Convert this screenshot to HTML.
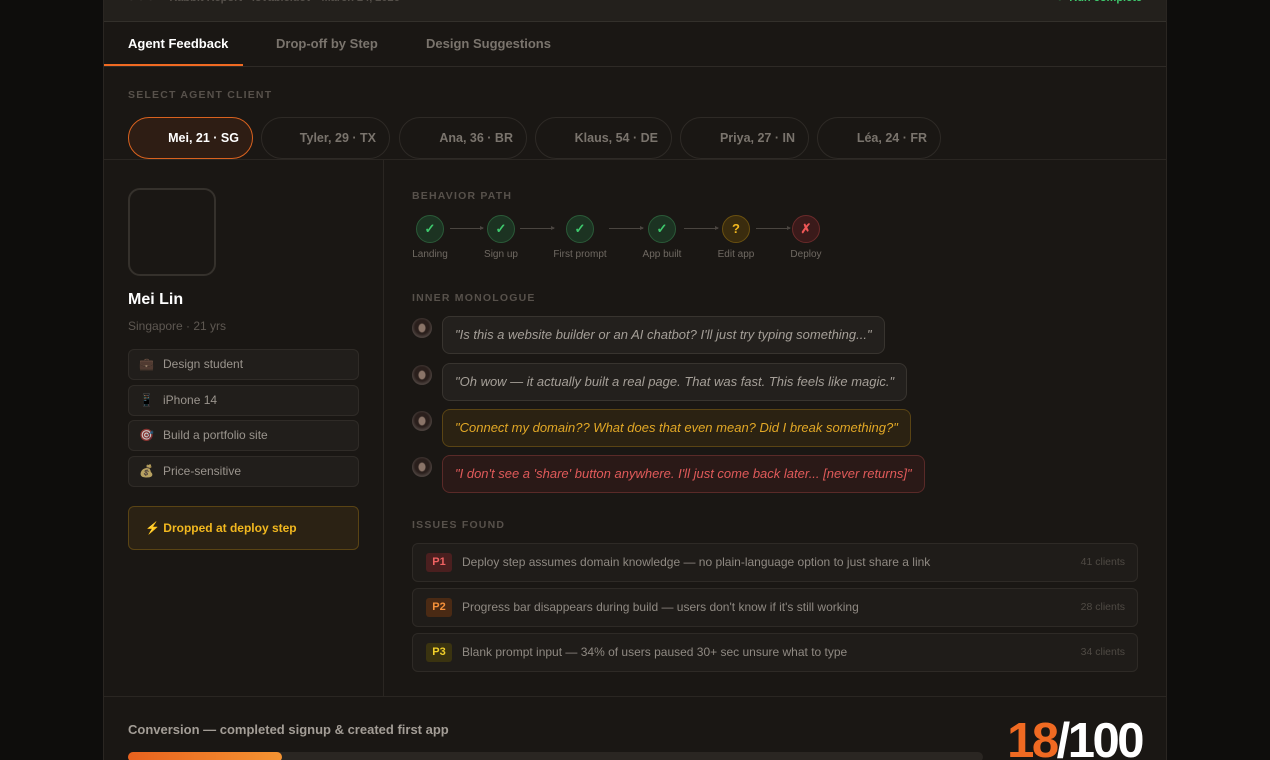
<!DOCTYPE html>
<html><head><meta charset="utf-8"><style>
*{box-sizing:border-box;margin:0;padding:0}
html,body{width:1270px;height:760px;overflow:hidden}
body{background:#0e0d0c;font-family:"Liberation Sans",sans-serif;position:relative}
.panel{position:absolute;left:103px;top:0;width:1064px;height:760px;background:#1a1714;border-left:1px solid #2a2622;border-right:1px solid #2a2622;overflow:hidden}
.top{position:absolute;left:0;top:0;width:100%;height:22px;background:#23201c;border-bottom:1px solid #33302b;overflow:hidden}
.tabs{position:absolute;top:22px;left:0;width:100%;height:45px;border-bottom:1px solid #2e2a26}
.tab{position:absolute;top:14px;font-size:13px;font-weight:bold;color:#7a746d}
.lab{position:absolute;font-size:10.5px;font-weight:bold;letter-spacing:1.2px;color:#57514b}
.pill{position:absolute;top:117px;height:42px;border:1px solid #2e2a26;border-radius:21px;font-size:12.5px;font-weight:bold;color:#7a746d;text-align:right;padding-right:13px;line-height:40px}
.chip{position:absolute;left:24px;width:231px;height:31px;border:1px solid #2f2b27;border-radius:6px;background:#211e1b;font-size:12px;color:#9a948d;line-height:29px;padding-left:34px}
.chip i{position:absolute;left:10px;font-style:normal;font-size:12px;filter:saturate(.5) brightness(.8)}
.step{position:absolute;top:215px;width:28px;height:28px;border-radius:50%;text-align:center;line-height:26px;font-size:13px;font-weight:bold}
.ok{background:#1c3322;border:1px solid #2a5a38;color:#3ec96d}
.sl{position:absolute;top:249px;font-size:10px;color:#6f6962;text-align:center;width:80px}
.arr{position:absolute;top:228px;height:1px;background:#4a4540}
.arr:after{content:"";position:absolute;right:-1px;top:-2px;border-left:4px solid #4a4540;border-top:2.5px solid transparent;border-bottom:2.5px solid transparent}
.av{position:absolute;left:412px;width:20px;height:20px;border-radius:50%;background:radial-gradient(ellipse 4px 5px at 50% 50%,#8a7468 0 3px,transparent 4px),radial-gradient(circle at 50% 45%,#2a1f1c 0 7px,#4a403c 10px)}
.bub{position:absolute;left:442px;height:38px;border-radius:8px;border:1px solid #38342f;background:#23201d;font-size:13px;font-style:italic;color:#a59f98;line-height:36px;padding:0 12px}
.iss{position:absolute;left:412px;width:726px;height:39px;border:1px solid #2e2a26;border-radius:6px;background:#1f1c19;font-size:12px;color:#8f8982;line-height:37px;padding-left:49px}
.iss b{position:absolute;left:13px;top:9px;width:26px;height:19px;border-radius:3px;font-size:11px;line-height:19px;text-align:center}
.iss span{position:absolute;right:12px;top:0;line-height:37px;font-size:10.5px;color:#4f4a44}
</style></head><body>
<div class="panel">
 <div class="top">
  <div style="position:absolute;left:24px;top:-8px;font-size:11px;line-height:13px;color:#55504a;font-weight:bold">●&nbsp;●&nbsp;●&nbsp;&nbsp;&nbsp;&nbsp;&nbsp;Rabbit Report · lovable.dev · March 24, 2026</div>
  <div style="position:absolute;right:24px;top:-8px;font-size:11px;line-height:13px;color:#3ec96d;font-weight:bold">●&nbsp; Run complete</div>
 </div>
 <div class="tabs">
  <div class="tab" style="left:24px;color:#fff">Agent Feedback</div>
  <div style="position:absolute;left:0;top:42px;width:139px;height:2px;background:#f06a22"></div>
  <div class="tab" style="left:172px">Drop-off by Step</div>
  <div class="tab" style="left:322px">Design Suggestions</div>
 </div>
 <div class="lab" style="left:24px;top:89px">SELECT AGENT CLIENT</div>
 <div class="pill" style="left:24px;width:125px;background:#2e1d14;border-color:#d9621f;color:#fff">Mei, 21 · SG</div>
 <div class="pill" style="left:157px;width:129px">Tyler, 29 · TX</div>
 <div class="pill" style="left:295px;width:128px">Ana, 36 · BR</div>
 <div class="pill" style="left:431px;width:137px">Klaus, 54 · DE</div>
 <div class="pill" style="left:576px;width:129px">Priya, 27 · IN</div>
 <div class="pill" style="left:713px;width:124px">Léa, 24 · FR</div>
 <div style="position:absolute;left:0;top:159px;width:100%;height:1px;background:#2a2622"></div>
 <div style="position:absolute;left:279px;top:160px;width:1px;height:536px;background:#2a2622"></div>
 <div style="position:absolute;left:24px;top:188px;width:88px;height:88px;border:2px solid #35312c;border-radius:12px"></div>
 <div style="position:absolute;left:24px;top:291px;font-size:16px;font-weight:bold;color:#fff">Mei Lin</div>
 <div style="position:absolute;left:24px;top:319px;font-size:12px;color:#5e5852">Singapore · 21 yrs</div>
 <div class="chip" style="top:349px"><i>💼</i>Design student</div>
 <div class="chip" style="top:385px"><i>📱</i>iPhone 14</div>
 <div class="chip" style="top:420px"><i>🎯</i>Build a portfolio site</div>
 <div class="chip" style="top:456px"><i>💰</i>Price-sensitive</div>
 <div style="position:absolute;left:24px;top:506px;width:231px;height:44px;border:1px solid #5a4414;background:#2b2214;border-radius:6px;font-size:12px;font-weight:bold;color:#f2b81f;line-height:42px;padding-left:16px">⚡ Dropped at deploy step</div>
 <div style="position:absolute;left:0;top:696px;width:100%;height:1px;background:#2a2622"></div>
 <div style="position:absolute;left:24px;top:722px;font-size:13px;font-weight:bold;color:#a39d96">Conversion — completed signup &amp; created first app</div>
 <div style="position:absolute;left:24px;top:752px;width:855px;height:10px;border-radius:5px;background:#2a2622"></div>
 <div style="position:absolute;left:24px;top:752px;width:154px;height:10px;border-radius:5px;background:linear-gradient(90deg,#e8621e,#f59432)"></div>
 <div style="position:absolute;right:24px;top:713px;font-size:49px;line-height:56px;font-weight:bold;letter-spacing:-2.5px;color:#fff;font-family:'Liberation Sans Narrow','Liberation Sans',sans-serif"><span style="color:#f06a22">18</span>/100</div>
</div>
<div class="lab" style="left:412px;top:190px">BEHAVIOR PATH</div>
<div class="step ok" style="left:416px">✓</div><div class="sl" style="left:390px">Landing</div>
<div class="arr" style="left:450px;width:33px"></div>
<div class="step ok" style="left:487px">✓</div><div class="sl" style="left:461px">Sign up</div>
<div class="arr" style="left:520px;width:34px"></div>
<div class="step ok" style="left:566px">✓</div><div class="sl" style="left:540px">First prompt</div>
<div class="arr" style="left:609px;width:34px"></div>
<div class="step ok" style="left:648px">✓</div><div class="sl" style="left:622px">App built</div>
<div class="arr" style="left:684px;width:34px"></div>
<div class="step" style="left:722px;background:#3a2c0e;border:1px solid #6a5010;color:#f2b81f">?</div><div class="sl" style="left:696px">Edit app</div>
<div class="arr" style="left:756px;width:34px"></div>
<div class="step" style="left:792px;background:#3a1a1a;border:1px solid #6a2a2a;color:#ef5656">✗</div><div class="sl" style="left:766px">Deploy</div>
<div class="lab" style="left:412px;top:292px">INNER MONOLOGUE</div>
<div class="av" style="top:318px"></div><div class="bub" style="top:316px">"Is this a website builder or an AI chatbot? I'll just try typing something..."</div>
<div class="av" style="top:365px"></div><div class="bub" style="top:363px">"Oh wow — it actually built a real page. That was fast. This feels like magic."</div>
<div class="av" style="top:411px"></div><div class="bub" style="top:409px;background:#2b2212;border-color:#5a4414;color:#e2a826">"Connect my domain?? What does that even mean? Did I break something?"</div>
<div class="av" style="top:457px"></div><div class="bub" style="top:455px;background:#2a1917;border-color:#5a2a28;color:#e05a5a">"I don't see a 'share' button anywhere. I'll just come back later... [never returns]"</div>
<div class="lab" style="left:412px;top:519px">ISSUES FOUND</div>
<div class="iss" style="top:543px"><b style="background:#4a1f1f;color:#f06262">P1</b>Deploy step assumes domain knowledge — no plain-language option to just share a link<span>41 clients</span></div>
<div class="iss" style="top:588px"><b style="background:#4a2a14;color:#f5913a">P2</b>Progress bar disappears during build — users don't know if it's still working<span>28 clients</span></div>
<div class="iss" style="top:633px"><b style="background:#3a3310;color:#f2d02a">P3</b>Blank prompt input — 34% of users paused 30+ sec unsure what to type<span>34 clients</span></div>
</body></html>
